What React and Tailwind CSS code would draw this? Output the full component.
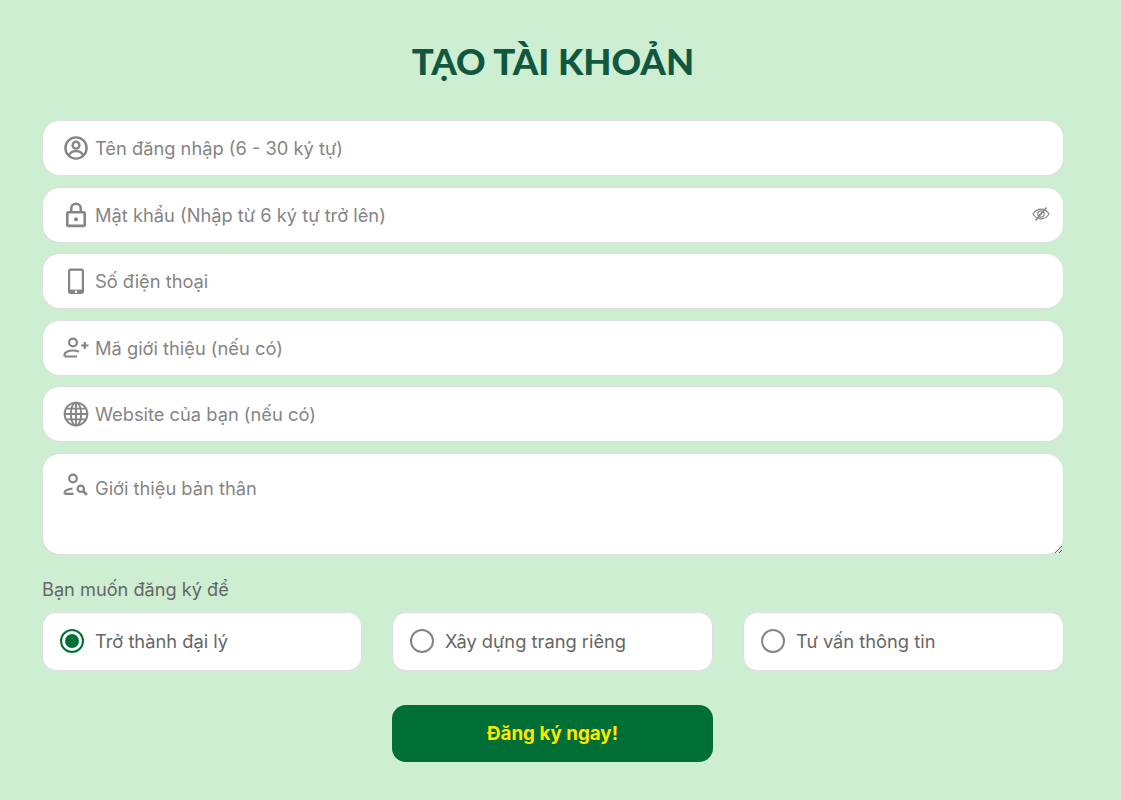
import React, { useState } from "react";

const UserCircleIcon = () => (
  <svg width="26" height="26" viewBox="0 0 26 26" fill="none" stroke="#858585" strokeWidth="2.4">
    <circle cx="13" cy="13" r="10.6" />
    <circle cx="13" cy="10.2" r="3.4" />
    <path d="M5.8 20.5c1.2-3 4-4.4 7.2-4.4s6 1.4 7.2 4.4" />
  </svg>
);

const LockIcon = () => (
  <svg width="26" height="26" viewBox="0 0 26 26" fill="none" stroke="#858585" strokeWidth="2.6">
    <rect x="4.3" y="10.3" width="17.4" height="13.6" rx="1.3" />
    <path d="M8.2 10.3V6.6a4.8 4.8 0 0 1 9.6 0v3.7" />
    <circle cx="13" cy="17.3" r="2" fill="#858585" stroke="none" />
  </svg>
);

const PhoneIcon = () => (
  <svg width="26" height="26" viewBox="0 0 26 26" fill="none">
    <rect x="5" y="0.5" width="16" height="25.5" rx="2.4" fill="#858585" />
    <rect x="7.2" y="2.8" width="11.6" height="18.8" fill="#fff" />
    <circle cx="13" cy="23.7" r="1.2" fill="#fff" />
  </svg>
);

const UserPlusIcon = () => (
  <svg width="26" height="26" viewBox="0 0 26 26" fill="none" stroke="#858585" strokeWidth="2.2">
    <circle cx="10" cy="7.5" r="3.9" />
    <path d="M1.5 21.5v-1.7c0-2.6 3.8-4.3 8.5-4.3 2.3 0 4.4.4 6 1.2M1.5 21.5h12.5" />
    <path d="M18.2 10.5h7.3M21.8 7v7" />
  </svg>
);

const GlobeIcon = () => (
  <svg width="26" height="26" viewBox="0 0 26 26" fill="none" stroke="#858585" strokeWidth="1.9">
    <circle cx="13" cy="13" r="11.4" />
    <ellipse cx="13" cy="13" rx="5.2" ry="11.4" />
    <path d="M13 1.6v22.8M1.6 13h22.8M3.2 7.6h19.6M3.2 18.4h19.6" />
  </svg>
);

const UserSearchIcon = () => (
  <svg width="26" height="26" viewBox="0 0 26 26" fill="none" stroke="#858585" strokeWidth="2.2">
    <circle cx="10" cy="5.5" r="3.8" />
    <path d="M1.5 20.8h9M1.5 20.8c0-1 .2-2.6 1.2-3.2 1.6-1 3.6-1.8 6.8-2" />
    <circle cx="17.8" cy="15.8" r="3.2" />
    <path d="M20.2 18.2l3.8 3.6" strokeWidth="2.6" />
  </svg>
);

const EyeOffIcon = () => (
  <svg width="18" height="18" viewBox="0 0 18 18" fill="none" stroke="#858585" strokeWidth="1.2">
    <path d="M1 9c2-3.2 4.8-4.8 8-4.8s6 1.6 8 4.8c-2 3.2-4.8 4.8-8 4.8S3 12.2 1 9z" />
    <circle cx="9" cy="9" r="3.2" />
    <path d="M3.5 15.5L14.5 2.5" strokeWidth="1.4" />
    <path d="M7 10.5L10.5 7" />
  </svg>
);

const fields = [
  { placeholder: "Tên đăng nhập (6 - 30 ký tự)", icon: <UserCircleIcon /> },
  { placeholder: "Mật khẩu (Nhập từ 6 ký tự trở lên)", icon: <LockIcon />, password: true },
  { placeholder: "Số điện thoại", icon: <PhoneIcon /> },
  { placeholder: "Mã giới thiệu (nếu có)", icon: <UserPlusIcon /> },
  { placeholder: "Website của bạn (nếu có)", icon: <GlobeIcon /> },
];

const options = ["Trở thành đại lý", "Xây dựng trang riêng", "Tư vấn thông tin"];

const App = () => {
  const [purpose, setpurpose] = useState(options[0]);

  return (
    <div className="min-h-[800px] bg-[#ceeed2] pl-[42px] pr-[57px] pt-[37px] font-['Inter',sans-serif]">
      <h1 className="h-[48px] text-center font-['Lato',sans-serif] text-[36.5px] leading-[48px] font-black text-[#11573f]">
        TẠO TÀI KHOẢN
      </h1>

      <form className="mt-[35px] flex flex-col" onSubmit={(e) => e.preventDefault()}>
        <div className="flex flex-col gap-[10.5px]">
          {fields.map((field) => (
            <div key={field.placeholder} className="relative">
              <span className="absolute left-[21px] top-[15px]">{field.icon}</span>
              <input
                className="h-[56px] w-full rounded-[18px] border border-[#dedede] bg-white pl-[52px] pr-10 text-[18.3px] text-[#555] placeholder-[#858585] focus:outline-none"
                type={field.password ? "password" : "text"}
                placeholder={field.placeholder}
              />
              {field.password && (
                <span className="absolute right-[14px] top-[18px]">
                  <EyeOffIcon />
                </span>
              )}
            </div>
          ))}

          <div className="relative flex">
            <span className="absolute left-[21px] top-[20px]">
              <UserSearchIcon />
            </span>
            <textarea
              className="h-[102px] w-full resize-y rounded-[18px] border border-[#dedede] bg-white pl-[52px] pr-4 pt-[21px] text-[18.3px] leading-[26px] text-[#555] placeholder-[#858585] focus:outline-none"
              placeholder="Giới thiệu bản thân"
            ></textarea>
          </div>
        </div>

        <p className="mt-[21px] h-[26px] text-[18.2px] leading-[26px] text-[#666]">Bạn muốn đăng ký để</p>

        <div className="mt-[10px] grid grid-cols-[320px_321px_1fr] gap-[30px]">
          {options.map((option) => (
            <label
              key={option}
              className="flex h-[59px] cursor-pointer items-center rounded-[14px] border border-[#dedede] bg-white pl-[17px] text-[18.3px] text-[#666]"
            >
              <input
                className="sr-only"
                type="radio"
                name="purpose"
                checked={purpose === option}
                onChange={() => setpurpose(option)}
              />
              {purpose === option ? (
                <span className="flex size-6 items-center justify-center rounded-full border-2 border-[#006f35]">
                  <span className="size-[14px] rounded-full bg-[#006f35]"></span>
                </span>
              ) : (
                <span className="size-6 rounded-full border-2 border-[#858585]"></span>
              )}
              <span className="ml-[11px] pt-[2px]">{option}</span>
            </label>
          ))}
        </div>

        <div className="mt-[34px] grid grid-cols-[320px_321px_1fr] gap-[30px]">
          <button
            className="col-start-2 h-[57px] rounded-[14px] bg-[#006f35] pt-[2px] text-[18.8px] font-bold text-[#ffe600]"
            type="submit"
          >
            Đăng ký ngay!
          </button>
        </div>
      </form>
    </div>
  );
};

export default App;
